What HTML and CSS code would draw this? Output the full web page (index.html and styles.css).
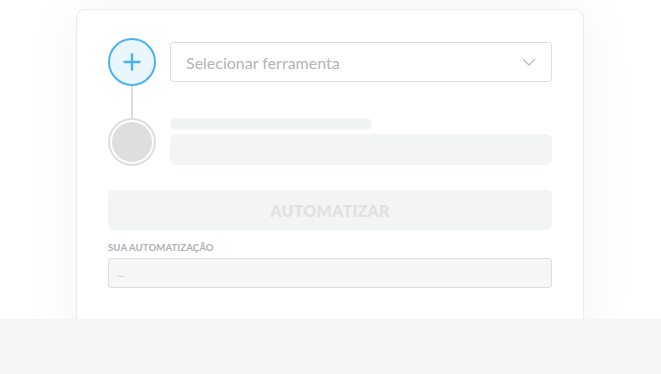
FILE: index.html
```html
<!DOCTYPE html>
<html lang="pt-BR">
<head>
  <meta charset="UTF-8">
  <meta name="viewport" content="width=device-width, initial-scale=1.0">
  <title>Automatizar</title>
  <link rel="stylesheet" href="styles.css">
</head>
<body>

<div class="stage">
  <div class="card">

    <div class="step">
      <div class="step-marker">
        <span class="dot dot-active">
          <svg width="18" height="18" viewBox="0 0 18 18">
            <path d="M9 1.5v15M1.5 9h15" stroke="#4cb2ef" stroke-width="2.4" stroke-linecap="round" fill="none"/>
          </svg>
        </span>
      </div>
      <div class="step-body">
        <div class="select">
          <span class="select-text">Selecionar ferramenta</span>
          <svg class="chevron" width="14" height="8" viewBox="0 0 14 8">
            <path d="M1 1l6 6 6-6" stroke="#b9bcbf" stroke-width="1.3" fill="none"/>
          </svg>
        </div>
      </div>
    </div>

    <div class="connector"></div>

    <div class="step step-empty">
      <div class="step-marker">
        <span class="dot dot-empty"><span class="dot-fill"></span></span>
      </div>
      <div class="step-body">
        <div class="skeleton skeleton-label"></div>
        <div class="skeleton skeleton-field"></div>
      </div>
    </div>

    <button type="button" class="btn-automate" disabled>AUTOMATIZAR</button>

    <label class="result-label" for="result">SUA AUTOMATIZAÇÃO</label>
    <div class="result" id="result">...</div>

  </div>
</div>

<div class="footer-band"></div>

</body>
</html>
```

FILE: styles.css
```css
body {
  font-family: Lato, "Open Sans", Arial, sans-serif;
  margin: 0;
  padding: 0;
  background-color: #fff;
}

.stage {
  height: 319px;
  overflow: hidden;
  padding-top: 9px;
  box-sizing: border-box;
}

.card {
  width: 508px;
  margin: 0 0 0 76px;
  height: 340px;
  padding: 28px 31px 0 31px;
  background-color: #fff;
  border: 1px solid #e9eaeb;
  border-radius: 9px;
  box-shadow: 0 0 60px rgba(30, 40, 60, 0.05);
  box-sizing: border-box;
}

.step {
  display: flex;
  align-items: center;
  gap: 14px;
}

.step-marker {
  flex: none;
  width: 48px;
}

.step-body {
  flex: 1;
}

.dot {
  width: 48px;
  height: 48px;
  border-radius: 50%;
  box-sizing: border-box;
  display: flex;
  align-items: center;
  justify-content: center;
}

.dot-active {
  background-color: #eaf6fe;
  border: 2px solid #4cb2ef;
}

.dot-empty {
  border: 2px solid #dcdee0;
  background-color: #fff;
}

.dot-fill {
  width: 40px;
  height: 40px;
  border-radius: 50%;
  background-color: #dcdee0;
}

.connector {
  width: 2px;
  height: 32px;
  margin-left: 23px;
  background-color: #dcdee0;
}

.select {
  height: 40px;
  border: 1px solid #dcdddf;
  border-radius: 4px;
  display: flex;
  align-items: center;
  justify-content: space-between;
  padding: 0 15px;
  box-sizing: border-box;
}

.select-text {
  font-size: 16px;
  color: #b3b4b5;
}

.skeleton {
  background-color: #f3f4f4;
  border-radius: 6px;
}

.skeleton-label {
  width: 202px;
  height: 12px;
  margin-bottom: 4px;
  background-color: #f1f2f2;
}

.skeleton-field {
  height: 31px;
  margin-bottom: 1px;
}

.btn-automate {
  display: block;
  width: 100%;
  height: 40px;
  margin-top: 24px;
  border: none;
  border-radius: 5px;
  background-color: #f3f4f4;
  color: #dfe1e3;
  font-family: inherit;
  font-size: 16px;
  font-weight: 900;
  letter-spacing: 0.3px;
}

.result-label {
  display: block;
  margin-top: 12px;
  font-size: 9.6px;
  font-weight: 700;
  color: #a9b1b8;
  letter-spacing: 0.1px;
}

.result {
  height: 30px;
  margin-top: 5px;
  padding: 0 8px;
  border: 1px solid #dcdddf;
  border-radius: 3px;
  background-color: #f5f6f7;
  font-size: 10px;
  color: #b4b8bc;
  line-height: 28px;
  box-sizing: border-box;
}

.footer-band {
  height: 55px;
  background-color: #f4f5f5;
}
```
